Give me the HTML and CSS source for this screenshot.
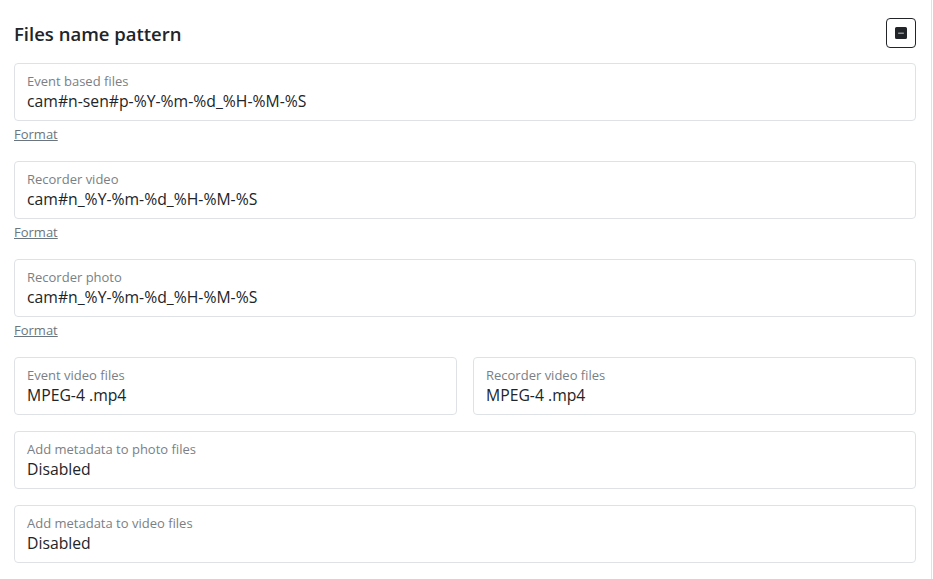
FILE: index.html
```html
<!DOCTYPE html>
<html lang="en">

<head>
    <meta charset="UTF-8">
    <meta name="viewport" content="width=device-width, initial-scale=1.0">
    <title>Files name pattern</title>
    <link rel="stylesheet" href="styles.css">
</head>

<body>

    <div class="card">
        <div class="card-header">
            <h5>Files name pattern</h5>
            <button class="collapse-btn" title="Collapse">
                <svg width="12" height="12" viewBox="0 0 16 16" fill="currentColor">
                    <path d="M2 0a2 2 0 0 0-2 2v12a2 2 0 0 0 2 2h12a2 2 0 0 0 2-2V2a2 2 0 0 0-2-2H2zm2.5 7.5h7a.5.5 0 0 1 0 1h-7a.5.5 0 0 1 0-1z" />
                </svg>
            </button>
        </div>

        <div class="field-group">
            <div class="field">
                <label>Event based files</label>
                <div class="value">cam#n-sen#p-%Y-%m-%d_%H-%M-%S</div>
            </div>
            <a href="#" class="format-link">Format</a>
        </div>

        <div class="field-group">
            <div class="field">
                <label>Recorder video</label>
                <div class="value">cam#n_%Y-%m-%d_%H-%M-%S</div>
            </div>
            <a href="#" class="format-link">Format</a>
        </div>

        <div class="field-group">
            <div class="field">
                <label>Recorder photo</label>
                <div class="value">cam#n_%Y-%m-%d_%H-%M-%S</div>
            </div>
            <a href="#" class="format-link">Format</a>
        </div>

        <div class="field-row">
            <div class="field">
                <label>Event video files</label>
                <div class="value">MPEG-4 .mp4</div>
            </div>
            <div class="field">
                <label>Recorder video files</label>
                <div class="value">MPEG-4 .mp4</div>
            </div>
        </div>

        <div class="field single">
            <label>Add metadata to photo files</label>
            <div class="value">Disabled</div>
        </div>

        <div class="field single">
            <label>Add metadata to video files</label>
            <div class="value">Disabled</div>
        </div>
    </div>

</body>

</html>
```

FILE: styles.css
```css
body {
    margin: 0;
    background-color: #fff;
    font-family: "Open Sans", "Noto Sans", Arial, sans-serif;
    color: #212529;
}

.card {
    width: 932px;
    min-height: 579px;
    box-sizing: border-box;
    padding: 18px 15px 0 14px;
    border-right: 1px solid #dee2e6;
}

.card-header {
    display: flex;
    justify-content: space-between;
    align-items: center;
    height: 30px;
    margin-bottom: 15px;
}

.card-header h5 {
    margin: 0;
    font-size: 18.5px;
    font-weight: 600;
}

.collapse-btn {
    width: 30px;
    height: 30px;
    padding: 0;
    display: flex;
    align-items: center;
    justify-content: center;
    background-color: #fff;
    color: #212529;
    border: 1px solid #212529;
    border-radius: 4px;
    cursor: pointer;
}

.field {
    box-sizing: border-box;
    height: 58px;
    padding: 8px 12px;
    border: 1px solid #dee2e6;
    border-radius: 4px;
}

.field label {
    display: block;
    font-size: 13px;
    line-height: 18px;
    color: #7a7f85;
}

.field .value {
    font-size: 15.75px;
    line-height: 22px;
}

.field-group {
    margin-bottom: 17px;
}

.format-link {
    display: inline-block;
    margin-top: 3px;
    font-size: 13px;
    line-height: 20px;
    color: #6c757d;
}

.field-row {
    display: grid;
    grid-template-columns: 1fr 1fr;
    gap: 16px;
    margin-bottom: 16px;
}

.single {
    margin-bottom: 16px;
}
```
